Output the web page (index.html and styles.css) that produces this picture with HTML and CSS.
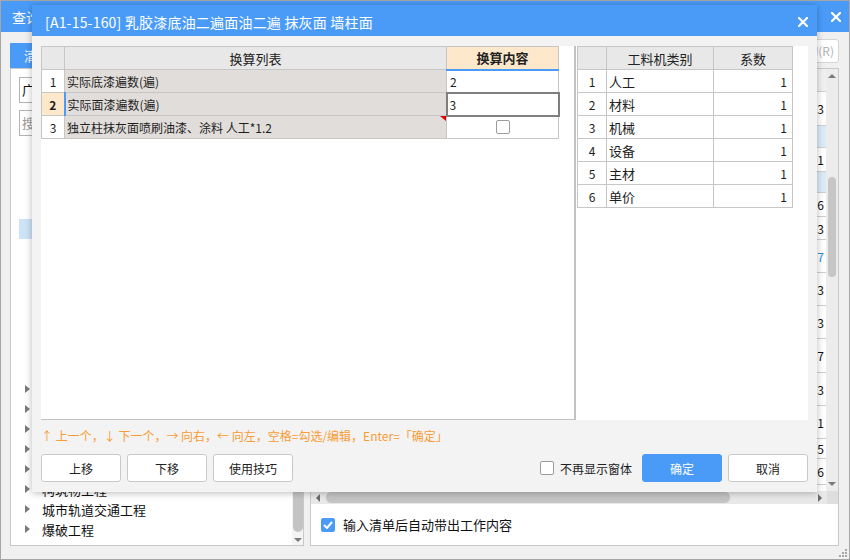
FILE: index.html
```html
<!DOCTYPE html>
<html lang="zh-CN">
<head>
<meta charset="utf-8">
<title>换算</title>
<link rel="stylesheet" href="styles.css">
</head>
<body>
<div class="win">
  <div class="win-title">
    <span>查询</span>
    <svg class="x-ico" width="10" height="10" viewBox="0 0 10 10"><path d="M1 1L9 9M9 1L1 9" stroke="#fff" stroke-width="2.2" stroke-linecap="square"/></svg>
  </div>
  <div class="win-body">
    <div class="lp">
      <div class="tab">清单</div>
      <div class="lp-box">
        <div class="lp-main">
          <div class="inp">广东</div>
          <div class="inp ph">搜索</div>
          <div class="tree">
            <div class="row"></div><div class="row"></div><div class="row"></div><div class="row"></div>
            <div class="row sel"></div>
            <div class="row"></div><div class="row"></div><div class="row"></div><div class="row"></div>
            <div class="row"></div><div class="row"></div><div class="row"></div>
            <div class="row"><i class="arr"></i></div>
            <div class="row"><i class="arr"></i></div>
            <div class="row"><i class="arr"></i></div>
            <div class="row"><i class="arr"></i></div>
            <div class="row"><i class="arr"></i></div>
            <div class="row"><i class="arr"></i><span>构筑物工程</span></div>
            <div class="row"><i class="arr"></i><span>城市轨道交通工程</span></div>
            <div class="row"><i class="arr"></i><span>爆破工程</span></div>
          </div>
        </div>
        <div class="lscroll">
          <div class="lthumb"></div>
          <i class="tri-down"></i>
        </div>
      </div>
    </div>
    <div class="rp">
      <div class="rp-tools"><span class="rbtn">查询(R)</span></div>
      <div class="rp-box">
        <div class="gridwrap">
          <div class="gdata">
            <div class="gcol">
              <div class="gc head"></div>
              <div class="gc" style="height:34px">3</div>
              <div class="gc blue" style="height:22px"></div>
              <div class="gc" style="height:24px">1</div>
              <div class="gc blue" style="height:21px"></div>
              <div class="gc" style="height:24px">6</div>
              <div class="gc" style="height:23px">3</div>
              <div class="gc link" style="height:33px">7</div>
              <div class="gc" style="height:33px">3</div>
              <div class="gc" style="height:33px">3</div>
              <div class="gc" style="height:34px">7</div>
              <div class="gc" style="height:33px">3</div>
              <div class="gc" style="height:33px">1</div>
              <div class="gc" style="height:20px">5</div>
              <div class="gc" style="height:26px">6</div>
            </div>
          </div>
          <div class="vscroll">
            <div class="vbtn"><i class="tri-up"></i></div>
            <div class="vtrack"><div class="vthumb"></div></div>
            <div class="vbtn"><i class="tri-down"></i></div>
          </div>
        </div>
        <div class="hscroll">
          <div class="hbtn"><i class="tri-left"></i></div>
          <div class="htrack"><div class="hthumb"></div></div>
          <div class="hbtn"><i class="tri-right"></i></div>
          <div class="corner"></div>
        </div>
        <div class="rp-foot">
          <span class="cb on"><svg width="10" height="8" viewBox="0 0 10 8"><path d="M1 4L4 7L9 1" fill="none" stroke="#fff" stroke-width="2"/></svg></span>
          <span>输入清单后自动带出工作内容</span>
        </div>
      </div>
    </div>
  </div>
  <svg class="grip" width="8" height="8" viewBox="0 0 8 8"><g fill="#a8a8a8"><rect x="6" y="0" width="2" height="2"/><rect x="3" y="3" width="2" height="2"/><rect x="6" y="3" width="2" height="2"/><rect x="0" y="6" width="2" height="2"/><rect x="3" y="6" width="2" height="2"/><rect x="6" y="6" width="2" height="2"/></g></svg>
</div>

<div class="dlg">
  <div class="dlg-title">
    <span class="dlg-text">[A1-15-160] 乳胶漆底油二遍面油二遍 抹灰面 墙柱面</span>
    <svg class="x-ico" width="10" height="10" viewBox="0 0 10 10"><path d="M1 1L9 9M9 1L1 9" stroke="#fff" stroke-width="2.2" stroke-linecap="square"/></svg>
  </div>
  <div class="dlg-body">
    <div class="panes">
      <div class="lpane">
        <table class="t1">
          <colgroup><col class="c-num"><col class="c-name"><col class="c-val"></colgroup>
          <tr class="hd"><th></th><th>换算列表</th><th class="hl">换算内容</th></tr>
          <tr><td class="num">1</td><td class="name">实际底漆遍数(遍)</td><td class="val">2</td></tr>
          <tr><td class="num cur">2</td><td class="name">实际面漆遍数(遍)</td><td class="val edit">3</td></tr>
          <tr><td class="num">3</td><td class="name mark">独立柱抹灰面喷刷油漆、涂料 人工*1.2</td><td class="val ctr"><span class="cb"></span></td></tr>
        </table>
      </div>
      <div class="rpane">
        <table class="t2">
          <colgroup><col class="d-num"><col class="d-name"><col class="d-val"></colgroup>
          <tr class="hd"><th></th><th>工料机类别</th><th>系数</th></tr>
          <tr><td class="num">1</td><td>人工</td><td class="rt">1</td></tr>
          <tr><td class="num">2</td><td>材料</td><td class="rt">1</td></tr>
          <tr><td class="num">3</td><td>机械</td><td class="rt">1</td></tr>
          <tr><td class="num">4</td><td>设备</td><td class="rt">1</td></tr>
          <tr><td class="num">5</td><td>主材</td><td class="rt">1</td></tr>
          <tr><td class="num">6</td><td>单价</td><td class="rt">1</td></tr>
        </table>
      </div>
    </div>
    <div class="hint">↑ 上一个，↓ 下一个，→ 向右，← 向左，空格=勾选/编辑，Enter=「确定」</div>
    <div class="actions">
      <div class="grp">
        <button class="btn">上移</button>
        <button class="btn">下移</button>
        <button class="btn">使用技巧</button>
      </div>
      <div class="grp">
        <label class="chk"><span class="cb"></span>不再显示窗体</label>
        <button class="btn primary">确定</button>
        <button class="btn">取消</button>
      </div>
    </div>
  </div>
</div>
</body>
</html>
```
FILE: styles.css
```css
* { box-sizing: border-box; }
html, body { margin: 0; padding: 0; }
body {
  width: 850px; height: 560px; overflow: hidden; position: relative;
  font-family: "Noto Sans CJK SC", "Microsoft YaHei", sans-serif;
  font-size: 12px; color: #1e1e1e; background: #f0f0f0;
}

/* ---------- background window ---------- */
.win {
  width: 850px; height: 560px; border: 1px solid #a6a6a6;
  display: flex; flex-direction: column; background: #f0f0f0; position: relative;
}
.win-title {
  height: 31px; flex: none; background: #4a9bf8; color: #fff;
  display: flex; align-items: center; justify-content: space-between;
  padding: 0 8px 0 11px; font-size: 14px;
}
.x-ico { display: block; }
.win-body { flex: 1; display: flex; gap: 6px; padding: 7px 10px 13px 9px; min-height: 0; }

.lp { width: 294px; display: flex; flex-direction: column; padding-top: 4px; }
.tab {
  width: 64px; height: 25px; background: #4a9bf8; color: #fff;
  line-height: 25px; padding-left: 14px; font-size: 13px; flex: none;
}
.lp-box { flex: 1; background: #fff; border: 1px solid #c9c9c9; display: flex; min-height: 0; }
.lp-main { flex: 1; padding: 8px 0 0 8px; display: flex; flex-direction: column; }
.inp {
  height: 26px; border: 1px solid #b4b4b4; margin-bottom: 7px; margin-right: 10px;
  padding-left: 2px; line-height: 24px; font-size: 13px; color: #111;
}
.inp.ph { color: #9a9a9a; margin-bottom: 3px; }
.tree { display: flex; flex-direction: column; }
.row { height: 20px; display: flex; align-items: center; font-size: 13px; color: #111; }
.row.sel { background: #cde4f7; }
.arr {
  width: 0; height: 0; margin: 0 12px 0 6px;
  border-left: 5px solid #7a7a7a; border-top: 4px solid transparent; border-bottom: 4px solid transparent;
}
.lscroll {
  width: 11px; background: #f4f4f4; display: flex; flex-direction: column;
  align-items: center; justify-content: flex-end; padding-bottom: 3px;
}
.lthumb { width: 10px; height: 240px; background: #c4c4c4; border-radius: 5px; margin-bottom: 6px; }

.tri-down { width: 0; height: 0; border-top: 4px solid #7a7a7a; border-left: 4px solid transparent; border-right: 4px solid transparent; }
.tri-up { width: 0; height: 0; border-bottom: 4px solid #7a7a7a; border-left: 4px solid transparent; border-right: 4px solid transparent; }
.tri-left { width: 0; height: 0; border-right: 4px solid #6a6a6a; border-top: 4px solid transparent; border-bottom: 4px solid transparent; }
.tri-right { width: 0; height: 0; border-left: 4px solid #6a6a6a; border-top: 4px solid transparent; border-bottom: 4px solid transparent; }

.rp { flex: 1; display: flex; flex-direction: column; min-width: 0; }
.rp-tools { height: 24px; display: flex; justify-content: flex-end; margin-bottom: 5px; flex: none; }
.rbtn {
  border: 1px solid #d6d6d6; border-radius: 3px; padding: 0 4px 0 10px;
  color: #b4b4b4; line-height: 22px; background: #fff; font-size: 12px;
}
.rp-box { flex: 1; border: 1px solid #c9c9c9; background: #fff; display: flex; flex-direction: column; min-height: 0; }
.gridwrap { flex: 1; display: flex; min-height: 0; }
.gdata { flex: 1; display: flex; justify-content: flex-end; }
.gcol { width: 40px; display: flex; flex-direction: column; border-left: 1px solid #e0e0e0; }
.gc {
  border-bottom: 1px solid #cfcfcf; display: flex; align-items: center;
  justify-content: flex-end; padding-right: 2px; font-size: 12px; color: #111; flex: none;
}
.gc.head { height: 23px; background: #f0f0f0; }
.gc.blue { background: #dcebf8; }
.gc.link { color: #1a8fe0; }
.vscroll { width: 12px; background: #ececec; display: flex; flex-direction: column; }
.vbtn { height: 14px; display: flex; align-items: center; justify-content: center; flex: none; }
.vtrack { flex: 1; padding: 94px 1px 0 2px; }
.vthumb { width: 8px; height: 100px; background: #c6c6c6; border-radius: 4px; }
.hscroll { height: 13px; flex: none; display: flex; background: #e8e8e8; }
.hbtn { width: 14px; display: flex; align-items: center; justify-content: center; }
.htrack { flex: 1; padding: 1px 0 0 1px; }
.hthumb { width: 404px; height: 11px; background: #c4c4c4; border-radius: 5px; }
.corner { width: 11px; background: #dedede; }
.rp-foot { height: 41px; flex: none; display: flex; align-items: center; gap: 8px; padding: 0 0 0 10px; font-size: 13px; color: #111; }

.cb {
  width: 14px; height: 14px; border: 1px solid #9c9c9c; border-radius: 2px;
  background: #fff; display: inline-flex; align-items: center; justify-content: center;
}
.cb.on { background: #4a9bf8; border-color: #4a9bf8; }

.grip { position: absolute; right: 2px; bottom: 2px; }

/* ---------- dialog ---------- */
.dlg {
  position: absolute; left: 32px; top: 5px; width: 785px; height: 487px;
  background: #f3f3f3; box-shadow: 0 1px 7px rgba(0, 0, 0, 0.28);
  display: flex; flex-direction: column;
}
.dlg-title {
  height: 31px; flex: none; background: #4a9bf8; color: #fff;
  display: flex; align-items: center; justify-content: space-between;
  padding: 2px 9px 0 13px; font-size: 14px;
}
.dlg-text { letter-spacing: 0.2px; }
.dlg-body { flex: 1; padding: 10px 9px 0 9px; display: flex; flex-direction: column; }
.panes { height: 374px; display: flex; flex: none; }
.lpane {
  width: 535px; background: #fff; border-right: 2px solid #c2c2c2;
  border-bottom: 1px solid #c2c2c2;
}
.rpane { flex: 1; background: #fff; padding-left: 1px; }

table { border-collapse: collapse; table-layout: fixed; font-size: 12px; }
th, td { border: 1px solid #c6c6c6; height: 23px; padding: 0; white-space: nowrap; }
th { background: #e8e8e8; font-weight: normal; color: #222; text-align: center; font-size: 13px; }

.t1 { width: 517px; }
.c-num { width: 23px; }
.c-name { width: 382px; }
.c-val { width: 112px; }
.t1 th.hl { background: #fde8cc; font-weight: bold; border-bottom: 2px solid #4a9bf8; }
.t1 td.num { text-align: center; background: #fff; }
.t1 td.num.cur { background: #fde8cc; font-weight: bold; border-right: 2px solid #4a9bf8; }
.t1 td.name { background: #e1ddda; padding-left: 2px; position: relative; }
.t1 td.name.mark::after {
  content: ""; position: absolute; top: 0; right: 0; width: 0; height: 0;
  border-top: 5px solid #e00000; border-left: 6px solid transparent;
}
.t1 td.val { background: #fff; padding-left: 3px; }
.t1 td.val.edit { border: 2px solid #7f7f7f; padding-left: 2px; }
.t1 td.val.ctr { text-align: center; padding-left: 0; padding-top: 2px; }

.t2 { width: 215px; }
.d-num { width: 29px; }
.d-name { width: 107px; }
.d-val { width: 79px; }
.t2 td { padding-left: 2px; background: #fff; font-size: 13px; }
.t2 td.num { text-align: center; padding-left: 0; font-size: 12px; }
.t2 td.rt { text-align: right; padding-right: 5px; font-size: 12px; }

.hint { margin-top: 6px; line-height: 20px; height: 20px; color: #f99c35; font-size: 12px; white-space: nowrap; }
.actions { margin-top: 8px; display: flex; justify-content: space-between; align-items: center; }
.grp { display: flex; align-items: center; gap: 6px; }
.btn {
  width: 80px; height: 28px; background: #fff; border: 1px solid #c9c9c9; border-radius: 3px;
  font-family: inherit; font-size: 12px; color: #222; padding: 0;
}
.btn.primary { background: #4a9bf8; border-color: #4a9bf8; color: #fff; }
.chk { display: flex; align-items: center; gap: 6px; margin-right: 4px; font-size: 12px; color: #222; }
```
